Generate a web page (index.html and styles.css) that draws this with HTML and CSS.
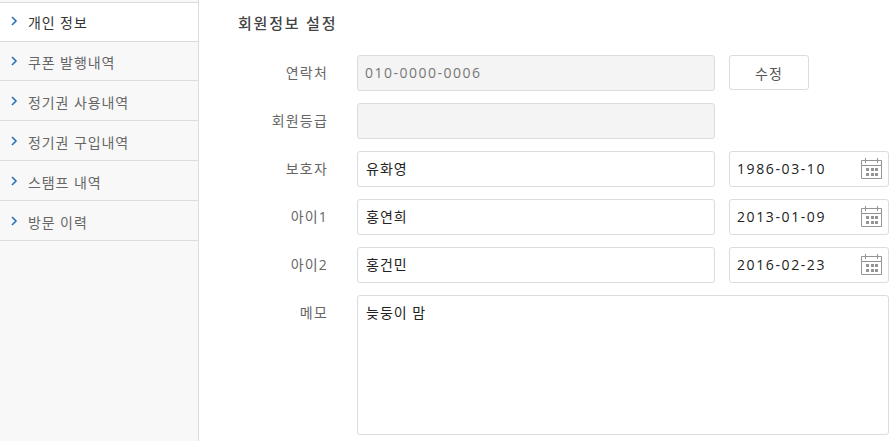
FILE: index.html
```html
<!DOCTYPE html>
<html lang="ko">
<head>
    <meta charset="UTF-8">
    <title>회원정보 설정</title>
    <link rel="stylesheet" href="styles.css">
</head>
<body>
    <svg class="defs" width="0" height="0">
        <symbol id="chev" viewBox="0 0 7 10">
            <path d="M1 1l4 4-4 4" fill="none" stroke="#2a72b8" stroke-width="1.6"/>
        </symbol>
        <symbol id="cal" viewBox="0 0 21 22">
            <path d="M.5 2.500h20v18H.5zM.5 7.500h20M4.500 0v5M16.500 0v5" fill="none" stroke="#959595"/>
            <path d="M5 10h3v3H5zM10 10h3v3h-3zM14 10h3v3h-3zM5 15h3v3H5zM10 15h3v3h-3zM14 15h3v3h-3z" fill="#959595"/>
        </symbol>
    </svg>

    <div class="wrap">
        <ul class="side">
            <li class="on"><svg class="chev"><use href="#chev"/></svg>개인 정보</li>
            <li><svg class="chev"><use href="#chev"/></svg>쿠폰 발행내역</li>
            <li><svg class="chev"><use href="#chev"/></svg>정기권 사용내역</li>
            <li><svg class="chev"><use href="#chev"/></svg>정기권 구입내역</li>
            <li><svg class="chev"><use href="#chev"/></svg>스탬프 내역</li>
            <li><svg class="chev"><use href="#chev"/></svg>방문 이력</li>
        </ul>

        <div class="main">
            <h2 class="title">회원정보 설정</h2>

            <div class="row">
                <label class="lbl">연락처</label>
                <div class="field off">010-0000-0006</div>
                <button class="btn" type="button">수정</button>
            </div>
            <div class="row">
                <label class="lbl">회원등급</label>
                <div class="field off"></div>
            </div>
            <div class="row">
                <label class="lbl">보호자</label>
                <div class="field">유화영</div>
                <div class="date">1986-03-10<svg class="cal"><use href="#cal"/></svg></div>
            </div>
            <div class="row">
                <label class="lbl">아이1</label>
                <div class="field">홍연희</div>
                <div class="date">2013-01-09<svg class="cal"><use href="#cal"/></svg></div>
            </div>
            <div class="row">
                <label class="lbl">아이2</label>
                <div class="field">홍건민</div>
                <div class="date">2016-02-23<svg class="cal"><use href="#cal"/></svg></div>
            </div>
            <div class="row">
                <label class="lbl">메모</label>
                <div class="memo">늦둥이 맘</div>
            </div>
        </div>
    </div>
</body>
</html>
```

FILE: styles.css
```css
html, body {
    margin: 0;
    padding: 0;
    height: 441px;
    overflow: hidden;
}

body {
    background-color: #fff;
    color: #333;
    font-family: 'Open Sans', 'Noto Sans CJK KR', sans-serif;
    font-size: 14px;
}

.defs {
    position: absolute;
}

.wrap {
    display: flex;
    height: 441px;
}

/* Sidebar */
.side {
    list-style: none;
    margin: 0;
    padding: 2px 0 0;
    width: 198px;
    background-color: #f8f8f8;
    border-right: 1px solid #dcdcdc;
}

.side li {
    display: flex;
    align-items: center;
    padding: 2px 0 0 11px;
    box-sizing: border-box;
    height: 40px;
    color: #666;
    border-bottom: 1px solid #dcdcdc;
    letter-spacing: 0.9px;
}

.side li:first-child {
    padding-top: 0;
    background-color: #fff;
    color: #333;
    border-top: 1px solid #dcdcdc;
}

.side li:nth-child(2) {
    height: 39px;
}

.chev {
    width: 7px;
    height: 10px;
    margin-right: 10px;
    margin-top: -2px;
}

/* Form */
.main {
    flex: 1;
    padding-left: 39px;
}

.title {
    margin: 0;
    height: 55px;
    line-height: 46px;
    font-size: 15px;
    font-weight: 500;
    color: #444;
    letter-spacing: 1.8px;
}

.row {
    display: flex;
    gap: 14px;
    margin-bottom: 12px;
}

.lbl {
    width: 90px;
    margin-right: 15px;
    text-align: right;
    line-height: 36px;
    color: #666;
    letter-spacing: 1.2px;
}

.field,
.date,
.memo {
    box-sizing: border-box;
    height: 36px;
    line-height: 34px;
    padding: 0 8px;
    border: 1px solid #dcdcdc;
    border-radius: 3px;
    color: #222;
    background-color: #fff;
    letter-spacing: 1px;
}

.field {
    width: 358px;
}

.off {
    background-color: #f4f4f4;
    color: #777;
    padding-left: 7px;
    letter-spacing: 1.5px;
}

.btn {
    width: 80px;
    height: 35px;
    padding: 0;
    background-color: #fff;
    border: 1px solid #dcdcdc;
    border-radius: 3px;
    color: #555;
    font: inherit;
    letter-spacing: 1px;
}

.date {
    width: 160px;
    display: flex;
    align-items: center;
    justify-content: space-between;
    padding: 0 6px 0 7px;
    letter-spacing: 1.6px;
}

.cal {
    width: 21px;
    height: 22px;
}

.memo {
    width: 532px;
    height: 140px;
}
```
